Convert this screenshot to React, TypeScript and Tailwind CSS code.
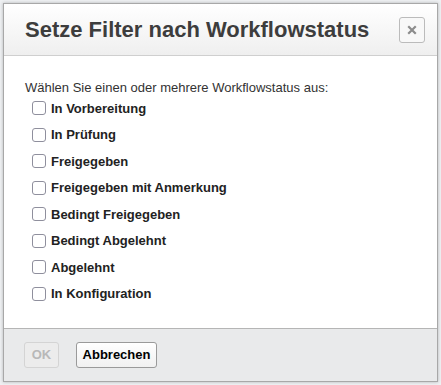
import React from 'react'

const statuses = [
  'In Vorbereitung',
  'In Prüfung',
  'Freigegeben',
  'Freigegeben mit Anmerkung',
  'Bedingt Freigegeben',
  'Bedingt Abgelehnt',
  'Abgelehnt',
  'In Konfiguration',
]

export default function App() {
  return (
    <div className="w-[441px] h-[385px] bg-[#eef0f2] p-[3px] font-['Liberation_Sans',Arial,sans-serif]">
      <div className="w-[435px] h-[379px] bg-white border border-[#a8a8a8] flex flex-col shadow-[0_0_3px_rgba(0,0,0,0.25)]">
        {/* Header */}
        <div className="h-[52px] shrink-0 flex items-center justify-between pl-[21px] pr-[12px] border-b border-[#cfcfcf] bg-gradient-to-b from-white to-[#efefef]">
          <h2 className="text-[22px] font-bold text-[#3d3d3d] leading-none">Setze Filter nach Workflowstatus</h2>
          <button className="w-[26px] h-[26px] border border-[#bbb] rounded-[3px] bg-[#f8f8f8] flex items-center justify-center">
            <svg width="10" height="10" viewBox="0 0 10 10">
              <path d="M2 2L8 8M8 2L2 8" stroke="#8c8c8c" strokeWidth="2.2" strokeLinecap="square" />
            </svg>
          </button>
        </div>

        {/* Body */}
        <div className="flex-1 pt-[24px] pl-[21px]">
          <p className="text-[13px] text-[#333] leading-[15px]">Wählen Sie einen oder mehrere Workflowstatus aus:</p>
          <ul className="pl-[7px]">
            {statuses.map((s) => (
              <li key={s} className="h-[26.5px] flex items-center">
                <span className="w-[14px] h-[14px] border border-[#8f8f9d] rounded-[3px] bg-white mr-[5px]" />
                <span className="text-[13px] font-bold text-[#222]">{s}</span>
              </li>
            ))}
          </ul>
        </div>

        {/* Footer */}
        <div className="h-[53px] shrink-0 border-t border-[#b5b5b5] bg-[#e9eaeb] flex items-center gap-[17px] pl-[20px]">
          <button disabled className="h-[26px] w-[35px] border border-[#d4d4d4] rounded-[3px] text-[13px] font-bold text-[#b8b8b8] bg-[#ececec]">OK</button>
          <button className="h-[26px] w-[81px] border border-[#9a9a9a] rounded-[3px] text-[13px] font-bold text-black bg-gradient-to-b from-white to-[#f1f1f1]">Abbrechen</button>
        </div>
      </div>
    </div>
  )
}
